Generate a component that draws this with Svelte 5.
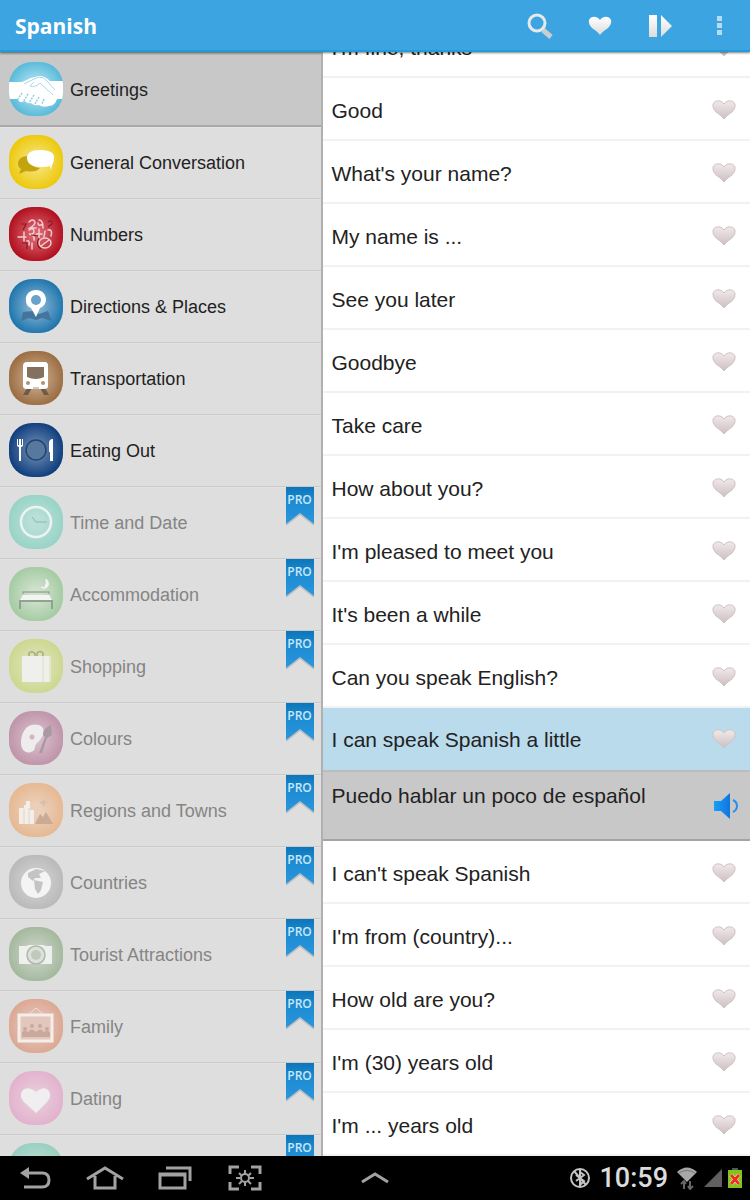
<script lang="ts">
  type Category = {
    name: string;
    icon: string;
    inner: string;
    outer: string;
    pro?: boolean;
  };

  const categories: Category[] = [
    { name: "Greetings", icon: "hands", inner: "#b4e4f2", outer: "#55b9d9" },
    { name: "General Conversation", icon: "chat", inner: "#f6e278", outer: "#ecc808" },
    { name: "Numbers", icon: "numbers", inner: "#d8606a", outer: "#b00d1c" },
    { name: "Directions & Places", icon: "pin", inner: "#7fb0d2", outer: "#1c74ac" },
    { name: "Transportation", icon: "train", inner: "#c9aa8c", outer: "#9a6b3f" },
    { name: "Eating Out", icon: "plate", inner: "#6484ae", outer: "#0d3c7c" },
    { name: "Time and Date", icon: "clock", inner: "#b9e0d8", outer: "#97d3c6", pro: true },
    { name: "Accommodation", icon: "bed", inner: "#cfe0cd", outer: "#a3cba1", pro: true },
    { name: "Shopping", icon: "bag", inner: "#dfe4bd", outer: "#ccd78d", pro: true },
    { name: "Colours", icon: "palette", inner: "#d6bcc8", outer: "#be93a9", pro: true },
    { name: "Regions and Towns", icon: "town", inner: "#ebcfb9", outer: "#e6b891", pro: true },
    { name: "Countries", icon: "globe", inner: "#d2d2d2", outer: "#b9b9b9", pro: true },
    { name: "Tourist Attractions", icon: "camera", inner: "#c8d2c4", outer: "#a3b89d", pro: true },
    { name: "Family", icon: "family", inner: "#e4c6bb", outer: "#dca792", pro: true },
    { name: "Dating", icon: "love", inner: "#e8cbda", outer: "#e3b1cd", pro: true },
    { name: "", icon: "", inner: "#b9ddd3", outer: "#97cfc0", pro: true },
  ];

  const phrases = [
    { text: "I'm fine, thanks", translation: "Estoy bien, gracias" },
    { text: "Good", translation: "Bien" },
    { text: "What's your name?", translation: "¿Cómo te llamas?" },
    { text: "My name is ...", translation: "Me llamo ..." },
    { text: "See you later", translation: "Hasta luego" },
    { text: "Goodbye", translation: "Adiós" },
    { text: "Take care", translation: "Cuídate" },
    { text: "How about you?", translation: "¿Y tú?" },
    { text: "I'm pleased to meet you", translation: "Encantado de conocerte" },
    { text: "It's been a while", translation: "Cuánto tiempo" },
    { text: "Can you speak English?", translation: "¿Hablas inglés?" },
    { text: "I can speak Spanish a little", translation: "Puedo hablar un poco de español" },
    { text: "I can't speak Spanish", translation: "No hablo español" },
    { text: "I'm from (country)...", translation: "Soy de ..." },
    { text: "How old are you?", translation: "¿Cuántos años tienes?" },
    { text: "I'm (30) years old", translation: "Tengo treinta años" },
    { text: "I'm ... years old", translation: "Tengo ... años" },
  ];

  let category = $state(0);
  let open = $state(11);
</script>

{#snippet glyph(icon: string)}
  <svg viewBox="0 0 54 54" width="54" height="54" aria-hidden="true">
    {#if icon === "hands"}
      <path d="M0 20H13L22 16L30 14Q36 14 41 19H54V37H48Q46 44 40 44Q34 46 30 43Q25 44 22 41Q18 42 16 39Q10 42 9 37H0Z" fill="#fff" />
      <path d="M15 22L23 18L30 15Q35 15 38 19L46 28M25 20L21 24Q26 26 31 21L44 33" fill="none" stroke="#a5d9ea" stroke-width="1" />
      <path d="M13 31L9 37M19 32L14 40M25 33L20 41M30 35L26 42M35 37L33 42" stroke="#8fcfe4" stroke-width="1.5" stroke-dasharray="2 1" />
    {:else if icon === "chat"}
      <path d="M22 21Q9 20 9 29Q9 32 12 34L10 39L17 36Q27 38 31 33Q22 32 20 26Z" fill="#c3a40f" />
      <path d="M31 15C22 15 18 18 18 23C18 29 24 32 32 32Q38 32 41 31L42 35L43 30Q45 28 45 22C45 17 39 15 31 15Z" fill="#fff" />
    {:else if icon === "numbers"}
      <g fill="none" stroke="#f0cdd0" stroke-width="1.5" stroke-linecap="round">
        <path d="M20 15Q24 11 26 15Q26 18 21 21H27M30 13Q34 13 34 21M29 16Q29 20 34 17M9 30H17M15 25V34M20 23Q25 20 25 25Q24 28 20 27Q26 28 25 33M30 22V31M27 27H33M23 36V42M18 34Q21 33 20 38" />
        <ellipse cx="36" cy="36" rx="6" ry="5" />
        <path d="M32 39L40 33M39 23Q44 22 42 29M36 24L35 30" />
      </g>
      <path d="M12 17H17L14 23M39 15Q44 12 43 17L39 20M30 31Q26 38 32 42M13 36H18V42M22 28L29 29" fill="none" stroke="#8c1822" stroke-width="1.2" />
    {:else if icon === "pin"}
      <path d="M14 33L24 32L30 35L39 32L43 42L33 39L27 41L20 39L12 42Z" fill="#44759c" />
      <path d="M27 11C20 11 16 16 17 22Q17 27 22 29L27 38L31 29Q37 26 37 21C37 15 33 11 27 11Z" fill="#fff" />
      <circle cx="27" cy="21" r="5" fill="#67a2c9" />
    {:else if icon === "train"}
      <path d="M18 37H23L19 44H14ZM31 37H36L40 44H35Z" fill="#6d5b4c" />
      <path d="M18 11H36Q39 11 39 15V35Q39 38 35 38H18Q14 38 14 35V15Q14 11 18 11Z" fill="#fff" />
      <path d="M18 16H35V26Q27 30 18 26Z" fill="#84705f" />
      <circle cx="19" cy="32" r="2" fill="#b4906f" />
      <circle cx="34" cy="32" r="2" fill="#b4906f" />
      <path d="M24 37H30" stroke="#b4906f" />
    {:else if icon === "plate"}
      <circle cx="27" cy="27" r="10" fill="#58799f" stroke="#24446f" stroke-width="1.5" />
      <path d="M8 16V22Q8 24 10 24V38H12V24Q14 24 14 22V16H13V22H12V16H10V22H9V16ZM41 38V29H40V20Q40 16 44 16V38Z" fill="#fff" />
    {:else if icon === "clock"}
      <circle cx="27" cy="27" r="15" fill="none" stroke="#edf3f1" stroke-width="2.5" />
      <path d="M23 22L27 27H38" fill="none" stroke="#8eb7ae" stroke-width="1" />
    {:else if icon === "bed"}
      <path d="M37 12Q42 17 37 21Q34 22 32 20Q38 23 37 12Z" fill="#f2f5f1" stroke="#f2f5f1" />
      <path d="M14 27V25H40V27" fill="none" stroke="#9baa9a" stroke-width="1.5" />
      <path d="M14 28H40L43 33H11Z" fill="#f2f5f1" />
      <path d="M11 42V34H43V42" fill="none" stroke="#92a290" stroke-width="2" />
    {:else if icon === "bag"}
      <path d="M20 18V14Q23 11 26 15V18M28 18V14Q31 11 34 14V18" fill="none" stroke="#a6aa83" stroke-width="1.5" />
      <path d="M13 17H42V43H13Z" fill="#efefeb" />
      <path d="M34 17V43" stroke="#dde0c4" />
      <path d="M41 17V43" stroke="#e3e6d0" stroke-width="2" />
    {:else if icon === "palette"}
      <path d="M30 14C18 11 12 21 12 32C12 39 17 43 22 41C28 39 24 35 29 31C34 27 38 17 30 14Z" fill="#efecee" />
      <circle cx="23" cy="26" r="2.5" fill="#d2b4c3" />
      <path d="M42 14Q34 17 34 24L36 26L30 42L33 42L38 27L43 24Z" fill="#aa98a2" />
    {:else if icon === "town"}
      <path d="M26 41L31 31L34 34L37 29L44 41Z" fill="#c9ab95" />
      <path d="M35 15L36 18L39 19L36 21L35 24L33 21L30 19L34 18Z" fill="#dcbea8" />
      <path d="M10 25H15V22H17V18H21V27H25V41H10Z" fill="#f2eee9" />
      <path d="M15 26V41M20 25V41" stroke="#e6d3c4" />
    {:else if icon === "globe"}
      <circle cx="27" cy="28" r="15" fill="#f4f4f4" />
      <path d="M19 18L27 14L36 16L30 19L32 23L26 23L24 26L19 22ZM25 25L34 27L32 35L29 39L26 34Z" fill="#c4c4c4" />
    {:else if icon === "camera"}
      <path d="M10 19H17L20 18H34L37 19H43V37H10Z" fill="#eef0ed" />
      <circle cx="27" cy="28" r="9" fill="#dde1db" stroke="#aeb8aa" stroke-width="1.5" />
      <circle cx="27" cy="28" r="5" fill="#c0c9bc" />
    {:else if icon === "family"}
      <path d="M20 15L27 9L34 15" fill="none" stroke="#f0ddd5" />
      <path d="M10 16H43V42H10Z" fill="#e3c7bc" stroke="#f4eeeb" stroke-width="3" />
      <g fill="#c8a99c">
        <circle cx="16" cy="30" r="2" /><circle cx="23" cy="27" r="2" /><circle cx="31" cy="27" r="2" /><circle cx="38" cy="30" r="2" />
        <path d="M13 38V33Q16 31 19 33Q23 28 27 33Q31 28 35 33Q38 31 41 33V38Z" />
      </g>
    {:else if icon === "love"}
      <path d="M27 42L15 31Q10 26 13 20Q18 14 27 21Q36 14 40 20Q43 26 38 31Z" fill="#f1eef0" />
    {/if}
  </svg>
{/snippet}

{#snippet heart(fill: string, stroke: string)}
  <svg viewBox="0 0 24 20" width="24" height="20" aria-hidden="true">
    <path d="M12 19Q10 16 4 12Q0 8 1 4Q3 0 8 1Q11 2 12 4Q13 2 16 1Q21 0 23 4Q24 8 20 12Q14 16 12 19Z" {fill} {stroke} stroke-width="1" />
  </svg>
{/snippet}

<svg class="defs" width="0" height="0" aria-hidden="true">
  <defs>
    <linearGradient id="heart-fill" x2="0" y2="1">
      <stop offset="0" stop-color="#f1e9e9" />
      <stop offset="1" stop-color="#cdbfc1" />
    </linearGradient>
    <linearGradient id="bar-fill" x2="0" y2="1">
      <stop offset="0" stop-color="#fff" />
      <stop offset="1" stop-color="#dcdcdc" />
    </linearGradient>
    <linearGradient id="ribbon-fill" x2="0" y2="1">
      <stop offset="0" stop-color="#0c76ba" />
      <stop offset="0.4" stop-color="#1c8bd2" />
      <stop offset="1" stop-color="#2a97de" />
    </linearGradient>
    <linearGradient id="sound-fill">
      <stop offset="0" stop-color="#12a2f8" />
      <stop offset="1" stop-color="#1373dd" />
    </linearGradient>
  </defs>
</svg>

<div class="screen">
  <header>
    <h1>Spanish</h1>
    <button aria-label="Search">
      <svg viewBox="0 0 28 28" width="28" height="28">
        <path d="M17 18L25 25" stroke="#c9cdd0" stroke-width="5" />
        <circle cx="11" cy="11" r="8" fill="none" stroke="#e6e9ea" stroke-width="3" />
      </svg>
    </button>
    <button aria-label="Favourites">{@render heart("url(#bar-fill)", "none")}</button>
    <button aria-label="Play all">
      <svg viewBox="0 0 24 24" width="24" height="24">
        <path d="M1 1H9V23H1ZM13 1L24 12L13 23Z" fill="url(#bar-fill)" />
      </svg>
    </button>
    <button aria-label="More options">
      <svg viewBox="0 0 6 20" width="6" height="20">
        <path d="M0 0H5V5H0ZM0 7H5V12H0ZM0 14H5V19H0Z" fill="#b5dcf2" />
      </svg>
    </button>
  </header>

  <main>
    <nav class="categories" aria-label="Categories">
      {#each categories as c, i}
        <button class="category" class:selected={category === i} class:locked={c.pro} onclick={() => (category = i)}>
          <span class="badge" style="--inner: {c.inner}; --outer: {c.outer}">{@render glyph(c.icon)}</span>
          <span class="name">{c.name}</span>
          {#if c.pro}
            <span class="pro">
              <svg viewBox="0 0 28 38" width="28" height="38" aria-hidden="true">
                <path d="M0 2H28V39L14 28L0 39Z" fill="#000" opacity="0.15" />
                <path d="M0 0H28V37L14 26L0 37Z" fill="url(#ribbon-fill)" />
              </svg>
              <span>PRO</span>
            </span>
          {/if}
        </button>
      {/each}
    </nav>

    <section class="phrases" aria-label="Phrases">
      {#each phrases as p, i}
        <div class="phrase" class:open={open === i}>
          <button class="text" onclick={() => (open = i)}>{p.text}</button>
          <button class="fav" aria-label="Add to favourites">{@render heart("url(#heart-fill)", "#cfc3c5")}</button>
        </div>
        {#if open === i}
          <div class="translation">
            <p lang="es">{p.translation}</p>
            <button aria-label="Listen">
              <svg viewBox="0 0 26 26" width="26" height="26">
                <path d="M1 8H8L17 0V26L8 18H1Z" fill="url(#sound-fill)" />
                <path d="M20 7Q24 9 24 13Q24 17 20 19" fill="none" stroke="#2a8fe6" stroke-width="2" />
              </svg>
            </button>
          </div>
        {/if}
      {/each}
    </section>
  </main>

  <footer>
    <div class="keys">
      <button aria-label="Back">
        <svg viewBox="0 0 32 24" width="32" height="24" fill="none" stroke="#a2a2a2" stroke-width="3">
          <path d="M6 7H23Q30 7 30 14Q30 21 23 21H5" />
          <path d="M10 1V13L1 7Z" fill="#a2a2a2" stroke="none" />
        </svg>
      </button>
      <button aria-label="Home">
        <svg viewBox="0 0 38 24" width="38" height="24" fill="none" stroke="#a2a2a2" stroke-width="3">
          <path d="M1 13L19 2L37 13M9 10V22H29V10" />
        </svg>
      </button>
      <button aria-label="Recent apps">
        <svg viewBox="0 0 34 24" width="34" height="24" fill="none" stroke="#a2a2a2" stroke-width="3">
          <path d="M8 2H32V15" />
          <path d="M2 8H27V22H2Z" />
          <path d="M2 9H27" />
        </svg>
      </button>
      <button aria-label="Screenshot">
        <svg viewBox="0 0 34 26" width="34" height="26" fill="none" stroke="#a2a2a2" stroke-width="3">
          <path d="M2 9V2H11M23 2H32V9M32 17V24H23M11 24H2V17" />
          <path d="M17 5V9M17 17V21M8 13H12M22 13H26M11 8L14 11M23 8L20 11M11 19L14 16M23 19L20 16" stroke-width="2" />
          <circle cx="17" cy="13" r="4" stroke-width="2" />
        </svg>
      </button>
    </div>
    <button class="caret" aria-label="Show tray">
      <svg viewBox="0 0 28 12" width="28" height="12" fill="none" stroke="#a2a2a2" stroke-width="3">
        <path d="M1 10L14 2L27 10" />
      </svg>
    </button>
    <div class="status">
      <svg viewBox="0 0 22 22" width="22" height="22" fill="none" stroke="#c4c4c4" stroke-width="2">
        <circle cx="11" cy="11" r="9" />
        <path d="M5 4L17 18M11 3V19M11 5L15 8L7 14M7 8L15 14L11 18" />
      </svg>
      <time>10:59</time>
      <svg viewBox="0 0 22 24" width="22" height="24">
        <path d="M1 6Q11 -3 21 6L11 16Z" fill="#a8a8a8" />
        <path d="M3 7Q11 2 19 7" fill="none" stroke="#777" />
        <path d="M8 23V15M5 18L8 15L10 18M14 15V23M12 20L14 23L17 20" fill="none" stroke="#666" stroke-width="2" />
      </svg>
      <svg viewBox="0 0 18 18" width="18" height="18"><path d="M18 0V18H0Z" fill="#606060" /></svg>
      <svg viewBox="0 0 14 20" width="14" height="20">
        <path d="M4 0H10V3H4Z" fill="#555" />
        <path d="M0 2H14V20H0Z" fill="#80c41c" />
        <path d="M3 7L11 16M11 7L3 16" stroke="#fff" stroke-width="4" />
        <path d="M3 7L11 16M11 7L3 16" stroke="#f02d1c" stroke-width="3" />
      </svg>
    </div>
  </footer>
</div>

<style>
  :global(body) {
    margin: 0;
  }

  .defs {
    position: absolute;
  }

  .screen {
    display: flex;
    flex-direction: column;
    height: 100vh;
    background: #fff;
    font-family: "Liberation Sans", Arial, sans-serif;
    color: #222;
  }

  button {
    padding: 0;
    border: 0;
    background: none;
    color: inherit;
    font: inherit;
    text-align: left;
    cursor: pointer;
  }

  svg {
    display: block;
  }

  header {
    display: flex;
    flex: none;
    height: 52px;
    box-sizing: border-box;
    padding: 2px 0 0 15px;
    background: #3ca4e0;
    border-bottom: 2px solid #229bdc;
    box-shadow: 0 1px 2px rgb(0 0 0 / 0.5);
    z-index: 1;
  }

  h1 {
    flex: 1;
    margin: 0;
    font: 700 21px/48px "Open Sans", sans-serif;
    color: #fff;
  }

  header button {
    display: grid;
    place-items: center;
    width: 60px;
  }

  main {
    display: flex;
    flex: 1;
    min-height: 0;
  }

  .categories {
    display: flex;
    flex: 0 0 43%;
    flex-direction: column;
    box-sizing: border-box;
    overflow: hidden;
    background: #dedede;
    border-top: 3px solid #bcbcbc;
    border-right: 2px solid #b0b0b0;
  }

  .category {
    display: flex;
    flex: none;
    align-items: center;
    gap: 7px;
    height: 72px;
    box-sizing: border-box;
    padding: 0 7px 2px 9px;
    border-bottom: 1px solid #c9c9c9;
    box-shadow: inset 0 1px #e4e4e4;
    font-size: 18px;
  }

  .category.selected {
    background: #c8c8c8;
    border-bottom: 2px solid #a9a9a9;
    box-shadow: none;
  }

  .badge {
    flex: none;
    width: 54px;
    height: 54px;
    border-radius: 23px;
    overflow: hidden;
    background: radial-gradient(circle, var(--inner) 15%, var(--outer) 75%);
  }

  .name {
    flex: 1;
    line-height: 20px;
    padding-top: 2px;
  }

  .locked .name {
    color: #858585;
  }

  .pro {
    display: grid;
    align-self: flex-start;
    justify-items: center;
    width: 28px;
    font: 600 12px/26px "Open Sans", sans-serif;
    color: #cbe6f7;
  }

  .pro > * {
    grid-area: 1 / 1;
  }

  .phrases {
    display: flex;
    flex: 1;
    flex-direction: column;
    justify-content: flex-end;
    min-width: 0;
    overflow: hidden;
    font-size: 21px;
  }

  .phrase {
    display: flex;
    flex: none;
    height: 63px;
    box-sizing: border-box;
    border-bottom: 2px solid #f2f2f2;
  }

  .phrase.open {
    height: 62px;
    background: #b9dbec;
    border-color: #b9dbec;
  }

  .text {
    flex: 1;
    padding: 4px 0 0 9px;
  }

  .fav {
    padding: 2px 14px 0 0;
  }

  .translation {
    display: flex;
    flex: none;
    align-items: center;
    height: 71px;
    box-sizing: border-box;
    padding: 0 11px 0 9px;
    background: #c8c8c8;
    border-top: 2px solid #bdbdbd;
    border-bottom: 2px solid #a4a4a4;
  }

  .translation p {
    flex: 1;
    align-self: flex-start;
    margin: 0;
    line-height: 48px;
  }

  footer {
    display: grid;
    grid-template-columns: 1fr auto 1fr;
    align-items: center;
    flex: none;
    height: 44px;
    background: #000;
  }

  .keys,
  .status {
    display: flex;
    align-items: center;
  }

  .keys button {
    display: grid;
    place-items: center;
    width: 70px;
    height: 44px;
  }

  .status {
    justify-content: flex-end;
    gap: 6px;
    padding-right: 8px;
  }

  time {
    padding: 0 2px;
    font: 500 27px/44px Roboto, sans-serif;
    color: #dcdcdc;
  }
</style>
